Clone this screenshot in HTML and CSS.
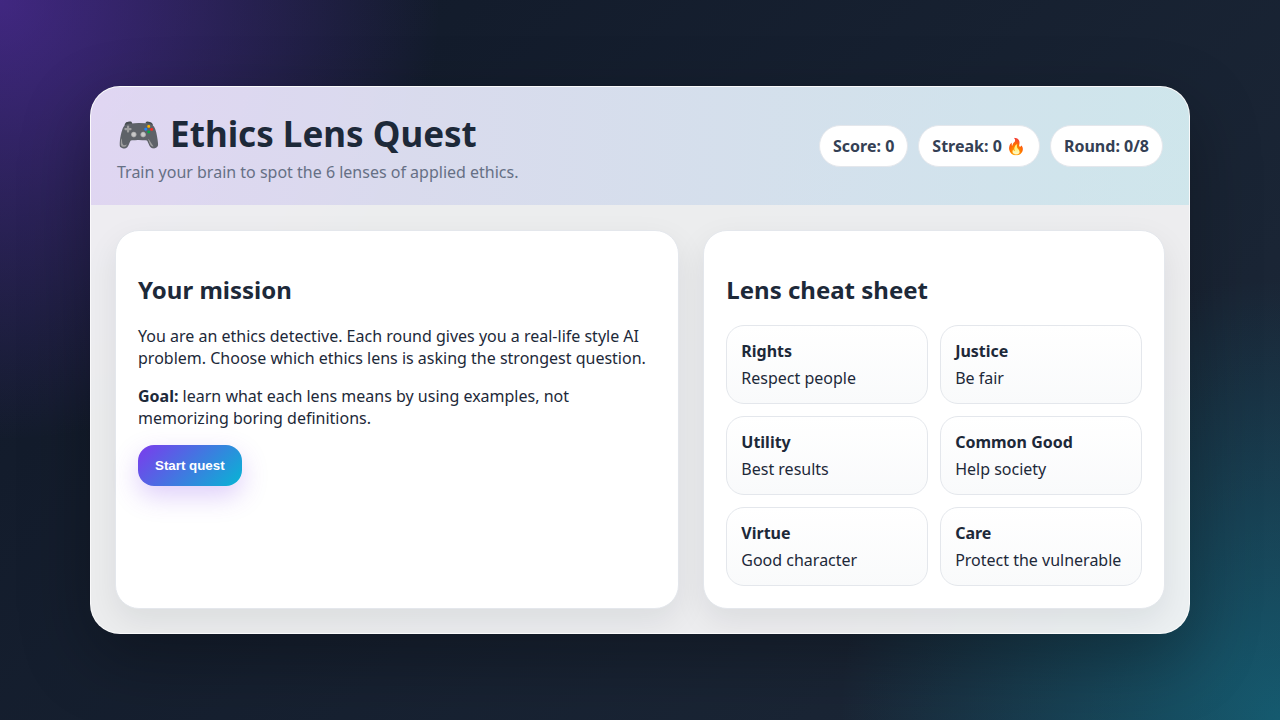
FILE: index.html
```html
<!DOCTYPE html>
<html lang="en">
<head>
    <meta charset="UTF-8">
    <meta name="viewport" content="width=device-width, initial-scale=1.0">
    <title>Ethics Lens Quest</title>
    <link rel="stylesheet" href="styles.css">
</head>
<body>
    <main class="game">
        <header class="top">
            <div>
                <h1>🎮 Ethics Lens Quest</h1>
                <p class="subtitle">Train your brain to spot the 6 lenses of applied ethics.</p>
            </div>
            <div class="stats">
                <div class="pill">Score: <span id="score">0</span></div>
                <div class="pill">Streak: <span id="streak">0</span> 🔥</div>
                <div class="pill">Round: <span id="round">0</span>/8</div>
            </div>
        </header>

        <div class="content">
            <section class="card">
                <h2>Your mission</h2>
                <p>You are an ethics detective. Each round gives you a real-life style AI problem. Choose which ethics lens is asking the strongest question.</p>
                <p><strong>Goal:</strong> learn what each lens means by using examples, not memorizing boring definitions.</p>
                <button type="button" class="primary">Start quest</button>
            </section>

            <aside class="card">
                <h2>Lens cheat sheet</h2>
                <div class="lenses">
                    <div class="lens"><strong>Rights</strong>Respect people</div>
                    <div class="lens"><strong>Justice</strong>Be fair</div>
                    <div class="lens"><strong>Utility</strong>Best results</div>
                    <div class="lens"><strong>Common Good</strong>Help society</div>
                    <div class="lens"><strong>Virtue</strong>Good character</div>
                    <div class="lens"><strong>Care</strong>Protect the vulnerable</div>
                </div>
            </aside>
        </div>
    </main>
</body>
</html>
```
FILE: styles.css
```css
* {
    box-sizing: border-box;
}

body {
    margin: 0;
    min-height: 100vh;
    display: grid;
    place-items: center;
    padding: 24px;
    font-family: "Noto Sans", sans-serif;
    color: #1d2939;
    background:
        radial-gradient(circle at top left, rgba(124, 58, 237, 0.45), transparent 30%),
        radial-gradient(circle at bottom right, rgba(6, 182, 212, 0.35), transparent 30%),
        linear-gradient(135deg, #101828, #1d2939);
}

.game {
    width: 100%;
    max-width: 1100px;
    background: rgba(255, 255, 255, 0.92);
    border: 1px solid rgba(255, 255, 255, 0.7);
    border-radius: 30px;
    box-shadow: 0 24px 70px rgba(0, 0, 0, 0.3);
    overflow: hidden;
}

.top {
    display: flex;
    justify-content: space-between;
    align-items: center;
    gap: 18px;
    padding: 22px 26px;
    background: linear-gradient(90deg, rgba(124, 58, 237, 0.13), rgba(6, 182, 212, 0.13));
}

h1 {
    margin: 0;
    font-size: 35px;
    line-height: 50px;
}

.subtitle {
    margin: 2px 0 0;
    line-height: 22px;
    color: #667085;
}

.stats {
    display: flex;
    flex-wrap: wrap;
    gap: 10px;
}

.pill {
    padding: 9px 13px;
    background: white;
    border: 1px solid #e4e7ec;
    border-radius: 999px;
    color: #344054;
    font-weight: bold;
    line-height: 22px;
}

.content {
    display: grid;
    grid-template-columns: 11fr 9fr;
    gap: 24px;
    padding: 25px 24px 24px;
}

.card {
    padding: 22px;
    background: white;
    border: 1px solid #e4e7ec;
    border-radius: 24px;
    box-shadow: 0 12px 32px rgba(16, 24, 40, 0.08);
}

h2 {
    margin: 20px 0 18px;
    font-size: 24px;
    line-height: 34px;
}

.card p {
    margin: 16px 0;
    line-height: 22px;
}

.primary {
    padding: 13px 17px;
    border: 0;
    border-radius: 16px;
    background: linear-gradient(135deg, #7c3aed, #06b6d4);
    color: white;
    font-family: "Liberation Sans", Arial, sans-serif;
    font-weight: bold;
    box-shadow: 0 10px 26px rgba(124, 58, 237, 0.25);
    cursor: pointer;
}

.lenses {
    display: grid;
    grid-template-columns: 1fr 1fr;
    gap: 12px;
}

.lens {
    padding: 14px;
    border: 1px solid #e4e7ec;
    border-radius: 18px;
    background: linear-gradient(180deg, #ffffff, #f9fafb);
    line-height: 22px;
}

.lens strong {
    display: block;
    margin-bottom: 5px;
}
```
